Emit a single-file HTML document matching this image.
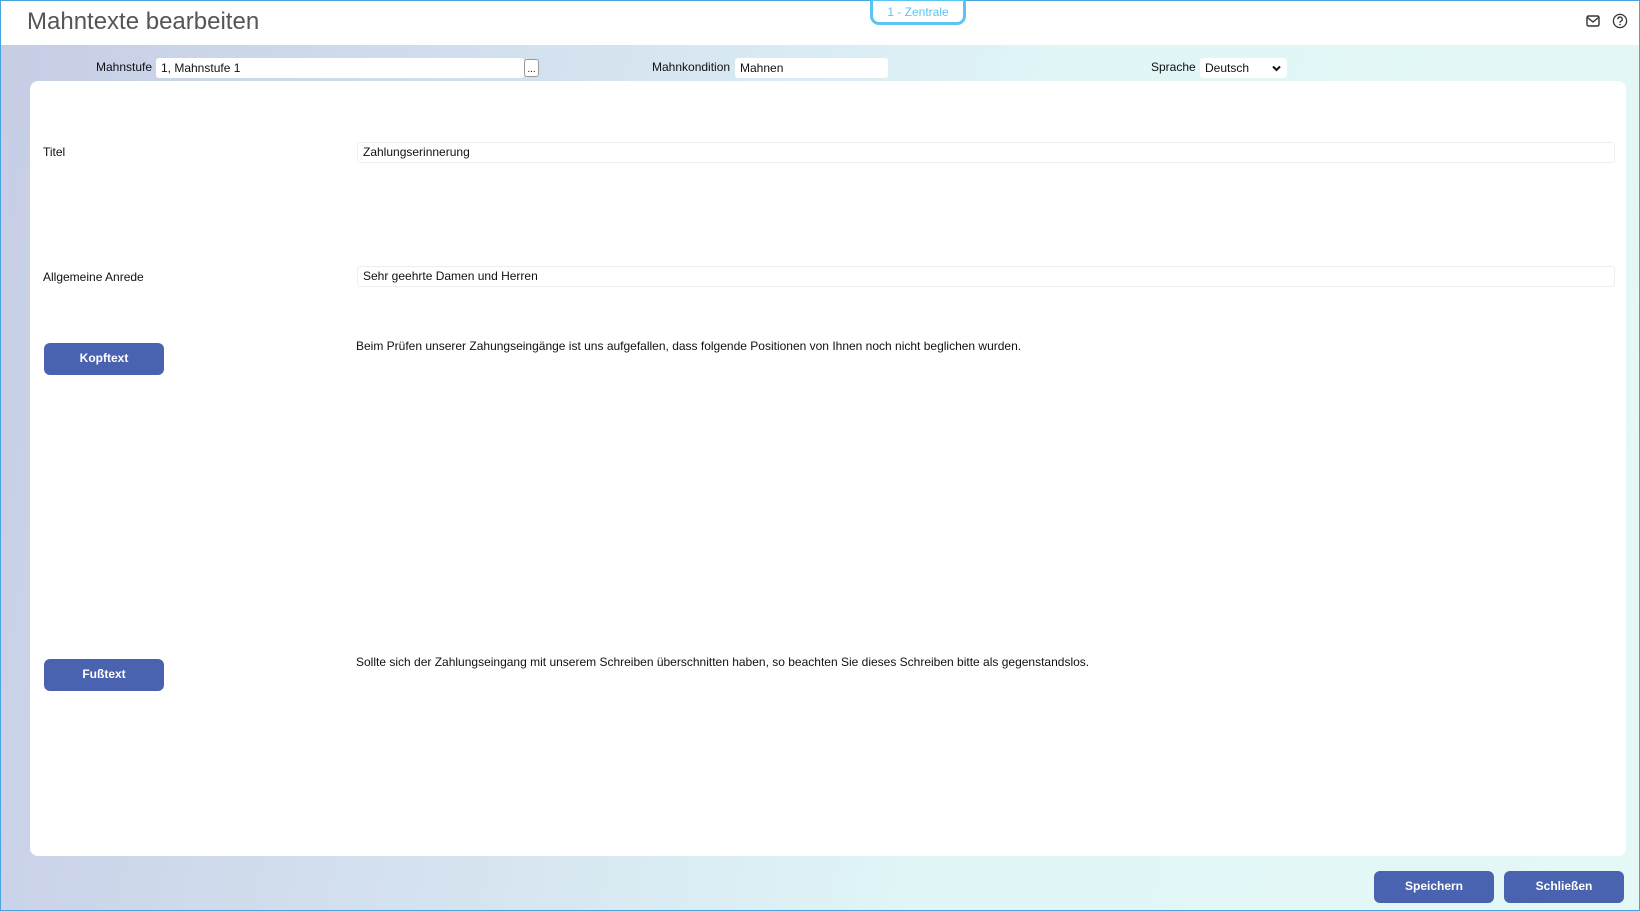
<!DOCTYPE html>
<html><head><meta charset="utf-8"><style>
*{box-sizing:border-box;margin:0;padding:0}
body{width:1640px;height:911px;overflow:hidden;font-family:"Liberation Sans",Arial,sans-serif;font-size:12px;color:#111;position:relative;background:linear-gradient(100deg,#c6cde6 0%,#d6e4f0 35%,#e0f6f7 60%,#e4f8f6 100%);border:1px solid #4aa3df}
.abs{position:absolute}
.hdr{left:0;top:0;width:1638px;height:44px;background:#fff}
.title{left:26px;top:7px;font-size:24px;color:#555}
.tab{left:869px;top:-3px;width:96px;height:27px;border:3px solid #5bc5f2;border-radius:0 0 9px 9px;color:#5bc5f2;text-align:center;font-size:12px;line-height:22px;background:#fff}
.inp{background:#fff;border-radius:3px;height:20px;line-height:20px;padding-left:5px}
.lbl{line-height:20px}
.panel{left:29px;top:80px;width:1596px;height:775px;background:#fff;border-radius:8px}
.fld{background:#fff;border:1px solid #eee;border-radius:3px;height:21px;line-height:19px;padding-left:5px}
.btn{background:#4a63b0;color:#fff;border-radius:6px;text-align:center;font-weight:bold;font-size:12px;height:32px;line-height:31px;width:120px}
</style></head><body>
<div class="abs hdr"></div>
<div class="abs title">Mahntexte bearbeiten</div>
<div class="abs tab">1 - Zentrale</div>
<svg class="abs" style="left:1585px;top:14px" width="14" height="12" viewBox="0 0 14 12"><rect x="1" y="1" width="12" height="10" rx="1.5" fill="none" stroke="#333" stroke-width="1.4"/><path d="M1.5 2.5L7 7l5.5-4.5" fill="none" stroke="#333" stroke-width="1.4"/></svg>
<svg class="abs" style="left:1611px;top:12px" width="16" height="16" viewBox="0 0 16 16"><circle cx="8" cy="8" r="6.6" fill="none" stroke="#333" stroke-width="1.3"/><path d="M5.8 6.2a2.2 2.2 0 1 1 3.2 2c-.8.4-1 .8-1 1.6" fill="none" stroke="#333" stroke-width="1.3"/><circle cx="8" cy="11.6" r=".8" fill="#333"/></svg>

<div class="abs lbl" style="left:95px;top:56px">Mahnstufe</div>
<div class="abs inp" style="left:155px;top:57px;width:368px">1, Mahnstufe 1</div>
<div class="abs" style="left:523px;top:58px;width:15px;height:18px;background:#fff;border:1px solid #999;border-radius:3px;font-size:10px;text-align:center;line-height:20px">...</div>
<div class="abs lbl" style="left:651px;top:56px">Mahnkondition</div>
<div class="abs inp" style="left:734px;top:57px;width:153px">Mahnen</div>
<div class="abs lbl" style="left:1150px;top:56px">Sprache</div>
<div class="abs inp" style="left:1199px;top:57px;width:87px">Deutsch<svg style="position:absolute;right:6px;top:7px" width="9" height="7" viewBox="0 0 9 7"><path d="M1 1.5l3.5 3.5L8 1.5" fill="none" stroke="#111" stroke-width="2"/></svg></div>

<div class="abs panel"></div>
<div class="abs" style="left:42px;top:144px">Titel</div>
<div class="abs fld" style="left:356px;top:141px;width:1258px">Zahlungserinnerung</div>
<div class="abs" style="left:42px;top:269px">Allgemeine Anrede</div>
<div class="abs fld" style="left:356px;top:265px;width:1258px">Sehr geehrte Damen und Herren</div>
<div class="abs btn" style="left:43px;top:342px">Kopftext</div>
<div class="abs" style="left:355px;top:338px">Beim Prüfen unserer Zahungseingänge ist uns aufgefallen, dass folgende Positionen von Ihnen noch nicht beglichen wurden.</div>
<div class="abs btn" style="left:43px;top:658px">Fußtext</div>
<div class="abs" style="left:355px;top:654px">Sollte sich der Zahlungseingang mit unserem Schreiben überschnitten haben, so beachten Sie dieses Schreiben bitte als gegenstandslos.</div>
<div class="abs btn" style="left:1373px;top:870px">Speichern</div>
<div class="abs btn" style="left:1503px;top:870px">Schließen</div>
</body></html>
